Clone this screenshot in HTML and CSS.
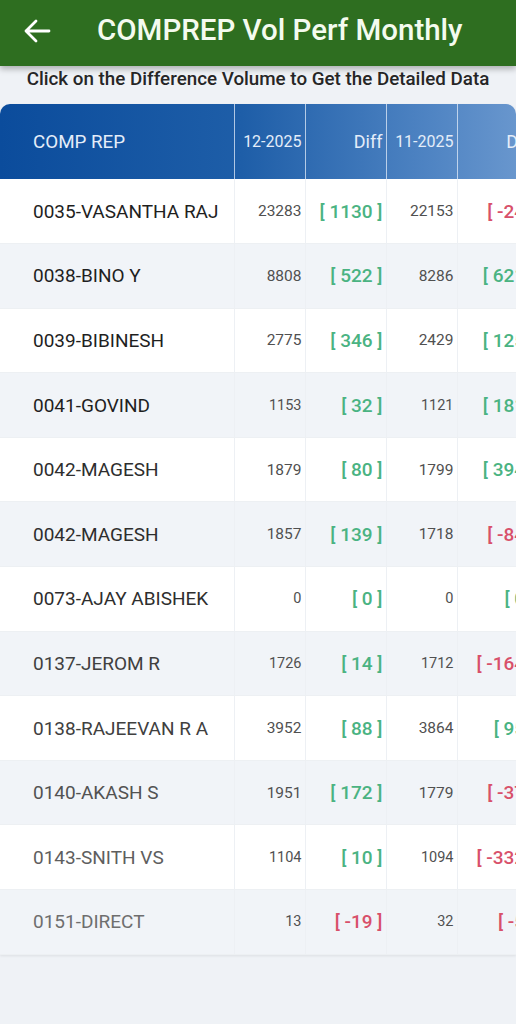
FILE: index.html
```html
<!DOCTYPE html>
<html>
<head>
<meta charset="utf-8">
<link rel="stylesheet" href="styles.css">
</head>
<body>
<header class="appbar">
  <svg class="back" width="30" height="30" viewBox="0 0 30 30"><path d="M27 15H4M14 5L4 15l10 10" fill="none" stroke="#fff" stroke-width="2.8" stroke-linecap="round" stroke-linejoin="round"/></svg>
  <h1 class="title">COMPREP Vol Perf Monthly</h1>
</header>
<p class="hint">Click on the Difference Volume to Get the Detailed Data</p>
<div class="card">
<table class="grid">
  <colgroup><col class="c-name"><col class="c-num"><col class="c-diff"><col class="c-num"><col class="c-diff"></colgroup>
  <thead>
    <tr><th class="h-name">COMP REP</th><th>12-2025</th><th class="h-diff">Diff</th><th>11-2025</th><th class="h-diff">Diff</th></tr>
  </thead>
  <tbody>
    <tr><td class="name">0035-VASANTHA RAJ</td><td class="num">23283</td><td class="diff up">[ 1130 ]</td><td class="num">22153</td><td class="diff down">[ -24 ]</td></tr>
    <tr><td class="name">0038-BINO Y</td><td class="num">8808</td><td class="diff up">[ 522 ]</td><td class="num">8286</td><td class="diff up">[ 621 ]</td></tr>
    <tr><td class="name">0039-BIBINESH</td><td class="num">2775</td><td class="diff up">[ 346 ]</td><td class="num">2429</td><td class="diff up">[ 125 ]</td></tr>
    <tr><td class="name">0041-GOVIND</td><td class="num sm">1153</td><td class="diff up">[ 32 ]</td><td class="num sm">1121</td><td class="diff up">[ 181 ]</td></tr>
    <tr><td class="name">0042-MAGESH</td><td class="num">1879</td><td class="diff up">[ 80 ]</td><td class="num">1799</td><td class="diff up">[ 394 ]</td></tr>
    <tr><td class="name">0042-MAGESH</td><td class="num">1857</td><td class="diff up">[ 139 ]</td><td class="num">1718</td><td class="diff down">[ -84 ]</td></tr>
    <tr><td class="name">0073-AJAY ABISHEK</td><td class="num sm">0</td><td class="diff up">[ 0 ]</td><td class="num sm">0</td><td class="diff up">[ 0 ]</td></tr>
    <tr><td class="name">0137-JEROM R</td><td class="num sm">1726</td><td class="diff up">[ 14 ]</td><td class="num sm">1712</td><td class="diff down">[ -164 ]</td></tr>
    <tr><td class="name">0138-RAJEEVAN R A</td><td class="num">3952</td><td class="diff up">[ 88 ]</td><td class="num">3864</td><td class="diff up">[ 95 ]</td></tr>
    <tr><td class="name">0140-AKASH S</td><td class="num">1951</td><td class="diff up">[ 172 ]</td><td class="num">1779</td><td class="diff down">[ -37 ]</td></tr>
    <tr><td class="name">0143-SNITH VS</td><td class="num sm">1104</td><td class="diff up">[ 10 ]</td><td class="num sm">1094</td><td class="diff down">[ -332 ]</td></tr>
    <tr><td class="name">0151-DIRECT</td><td class="num sm">13</td><td class="diff down">[ -19 ]</td><td class="num sm">32</td><td class="diff down">[ -5 ]</td></tr>
  </tbody>
</table>
</div>
</body>
</html>
```
FILE: styles.css
```css
* { box-sizing: border-box; }
html, body { margin: 0; padding: 0; }
body {
  width: 516px;
  height: 1024px;
  overflow: hidden;
  background: #eff2f6;
  font-family: Roboto, "Liberation Sans", sans-serif;
}
.appbar {
  height: 66px;
  background: #2e6e20;
  display: flex;
  align-items: center;
  padding-left: 22px;
  box-shadow: 0 3px 6px rgba(0,0,0,0.28);
  position: relative;
  z-index: 2;
}
.back { display: block; margin-top: -4px; }
.title {
  margin: -6px 0 0 45px;
  color: #f4fbef;
  font-size: 29.5px;
  font-weight: 500;
}
.hint {
  margin: 0;
  height: 38px;
  line-height: 26px;
  text-align: center;
  font-size: 18.8px;
  font-weight: 500;
  color: #262626;
  white-space: nowrap;
}
.card {
  width: 516px;
  overflow: hidden;
  border-radius: 10px 10px 0 0;
  box-shadow: 0 1px 3px rgba(0,0,0,0.08);
}
.grid {
  border-collapse: collapse;
  table-layout: fixed;
  width: 538px;
}
.c-name { width: 234px; }
.c-num { width: 71px; }
.c-diff { width: 81px; }
thead tr {
  height: 75px;
  background: linear-gradient(90deg, #0b4c9c 0%, #1e5ea8 45%, #4f84c3 80%, #6f9bd0 100%);
}
th {
  color: #e4edf9;
  font-weight: 400;
  font-size: 16px;
  text-align: right;
  padding: 0 3px 0 0;
  border-left: 1.5px solid rgba(225,235,248,0.75);
}
th.h-name {
  text-align: left;
  padding-left: 33px;
  font-size: 18.8px;
  border-left: none;
}
th.h-diff { font-size: 18px; }
tbody tr { height: 64.6px; background: #ffffff; }
tbody tr:nth-child(even) { background: #f1f4f8; }
td {
  padding: 0 3px 0 0;
  text-align: right;
  border-left: 1px solid #edf0f4;
  border-bottom: 1px solid #edf0f3;
}
td.name {
  text-align: left;
  padding-left: 33px;
  font-size: 19px;
  font-weight: 400;
  color: #1f1f1f;
  border-left: none;
}
tbody tr:nth-child(n+5) td.name { color: #2e2e2e; }
tbody tr:nth-child(n+8) td.name { color: #404040; }
tbody tr:nth-child(n+10) td.name { color: #525252; }
tbody tr:nth-child(n+11) td.name { color: #5e5e5e; }
tbody tr:nth-child(12) td.name { color: #6e6e6e; }
td.num {
  font-size: 15.5px;
  color: #505050;
  font-weight: 400;
}
td.num.sm { font-size: 14.5px; }
td.diff {
  font-size: 19px;
  font-weight: 500;
}
td.up { color: #4ab382; }
td.down { color: #d8506a; }
```
